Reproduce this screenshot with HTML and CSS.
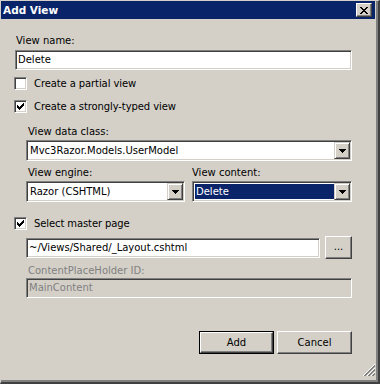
FILE: index.html
```html
<!DOCTYPE html>
<html>
<head>
<meta charset="utf-8">
<link rel="stylesheet" href="styles.css">
</head>
<body>
<div class="window">
  <div class="titlebar">
    <span class="title">Add View</span>
    <span class="close-btn"><svg width="8" height="7" viewBox="0 0 8 7" shape-rendering="crispEdges"><path d="M0 0h2v1h-2zM6 0h2v1h-2zM1 1h2v1h-2zM5 1h2v1h-2zM2 2h4v1h-4zM3 3h2v1h-2zM2 4h4v1h-4zM1 5h2v1h-2zM5 5h2v1h-2zM0 6h2v1h-2zM6 6h2v1h-2z" fill="#000"/></svg></span>
  </div>
  <div class="content">
    <div class="label l-first">View name:</div>
    <div class="field f-name"><span class="val">Delete</span></div>

    <div class="check c-partial"><span class="box"></span><span class="ctext">Create a partial view</span></div>
    <div class="check c-typed"><span class="box"><svg class="tick" width="7" height="7" viewBox="0 0 7 7" shape-rendering="crispEdges"><path d="M6 0h1v3h-1zM5 1h1v3h-1zM4 2h1v3h-1zM0 2h1v3h-1zM1 3h1v3h-1zM3 3h1v3h-1zM2 4h1v3h-1z" fill="#000"/></svg></span><span class="ctext">Create a strongly-typed view</span></div>

    <div class="indent">
      <div class="label l-class">View data class:</div>
      <div class="combo combo-class"><span class="val">Mvc3Razor.Models.UserModel</span><span class="drop"><svg width="7" height="4" viewBox="0 0 7 4" shape-rendering="crispEdges"><path d="M0 0h7v1h-7zM1 1h5v1h-5zM2 2h3v1h-3zM3 3h1v1h-1z" fill="#000"/></svg></span></div>
      <div class="pair">
        <div class="col col-engine">
          <div class="label">View engine:</div>
          <div class="combo"><span class="val">Razor (CSHTML)</span><span class="drop"><svg width="7" height="4" viewBox="0 0 7 4" shape-rendering="crispEdges"><path d="M0 0h7v1h-7zM1 1h5v1h-5zM2 2h3v1h-3zM3 3h1v1h-1z" fill="#000"/></svg></span></div>
        </div>
        <div class="col col-content">
          <div class="label">View content:</div>
          <div class="combo"><span class="val selected">Delete</span><span class="drop"><svg width="7" height="4" viewBox="0 0 7 4" shape-rendering="crispEdges"><path d="M0 0h7v1h-7zM1 1h5v1h-5zM2 2h3v1h-3zM3 3h1v1h-1z" fill="#000"/></svg></span></div>
        </div>
      </div>
    </div>

    <div class="check c-master"><span class="box"><svg class="tick" width="7" height="7" viewBox="0 0 7 7" shape-rendering="crispEdges"><path d="M6 0h1v3h-1zM5 1h1v3h-1zM4 2h1v3h-1zM0 2h1v3h-1zM1 3h1v3h-1zM3 3h1v3h-1zM2 4h1v3h-1z" fill="#000"/></svg></span><span class="ctext">Select master page</span></div>

    <div class="indent">
      <div class="path-row">
        <div class="field f-path"><span class="val">~/Views/Shared/_Layout.cshtml</span></div>
        <div class="btn btn-browse">...</div>
      </div>
      <div class="label disabled l-holder">ContentPlaceHolder ID:</div>
      <div class="field f-holder disabled-field"><span class="val">MainContent</span></div>
    </div>

    <div class="buttons">
      <div class="btn btn-default"><span class="btn-inner">Add</span></div>
      <div class="btn btn-cancel">Cancel</div>
    </div>
  </div>
  <svg class="grip" width="12" height="12" viewBox="0 0 12 12" shape-rendering="crispEdges">
    <path d="M11 0h1v1h-1zM10 1h1v1h-1zM9 2h1v1h-1zM8 3h1v1h-1zM7 4h1v1h-1zM6 5h1v1h-1zM5 6h1v1h-1zM4 7h1v1h-1zM3 8h1v1h-1zM2 9h1v1h-1zM1 10h1v1h-1zM0 11h1v1h-1z
             M11 4h1v1h-1zM10 5h1v1h-1zM9 6h1v1h-1zM8 7h1v1h-1zM7 8h1v1h-1zM6 9h1v1h-1zM5 10h1v1h-1zM4 11h1v1h-1z
             M11 8h1v1h-1zM10 9h1v1h-1zM9 10h1v1h-1zM8 11h1v1h-1z" fill="#fff"/>
    <path d="M11 1h1v2h-1zM10 2h1v2h-1zM9 3h1v2h-1zM8 4h1v2h-1zM7 5h1v2h-1zM6 6h1v2h-1zM5 7h1v2h-1zM4 8h1v2h-1zM3 9h1v2h-1zM2 10h1v2h-1zM1 11h1v1h-1z
             M11 5h1v2h-1zM10 6h1v2h-1zM9 7h1v2h-1zM8 8h1v2h-1zM7 9h1v2h-1zM6 10h1v2h-1zM5 11h1v1h-1z
             M11 9h1v2h-1zM10 10h1v2h-1zM9 11h1v1h-1z" fill="#808080"/>
  </svg>
</div>
</body>
</html>
```
FILE: styles.css
```css
html, body {
  margin: 0;
  padding: 0;
  background: #d4d0c8;
}
body {
  font-family: "DejaVu Sans", Tahoma, sans-serif;
  font-size: 10px;
  color: #000;
}
.window {
  position: relative;
  width: 380px;
  height: 384px;
  box-sizing: border-box;
  background: #d4d0c8;
  border-top: 1px solid #d4d0c8;
  border-left: 1px solid #d4d0c8;
  border-right: 2px solid #404040;
  border-bottom: 2px solid #404040;
  box-shadow: inset -2px -2px 0 #808080;
  overflow: hidden;
}
.titlebar {
  height: 18px;
  width: 374px;
  background: #0a246a;
  display: flex;
  align-items: center;
  justify-content: space-between;
  padding: 0 3px 0 2px;
  box-sizing: border-box;
}
.title {
  color: #fff;
  font-weight: bold;
  font-size: 10.5px;
  line-height: 18px;
}
.close-btn {
  width: 16px;
  height: 14px;
  box-sizing: border-box;
  background: #d4d0c8;
  border-top: 1px solid #fff;
  border-left: 1px solid #fff;
  border-right: 1px solid #404040;
  border-bottom: 1px solid #404040;
  box-shadow: inset -1px -1px 0 #808080;
  display: flex;
  align-items: center;
  justify-content: center;
  padding-right: 1px;
}
.close-btn svg { display: block; }
.content {
  padding-left: 13px;
  display: flex;
  flex-direction: column;
}
.label {
  line-height: 13px;
  height: 13px;
  white-space: nowrap;
}
.l-first {
  margin-top: 15px;
  padding-left: 2px;
}
.field, .combo {
  box-sizing: border-box;
  height: 20px;
  background: #fff;
  border: 1px solid;
  border-color: #808080 #fff #fff #808080;
  box-shadow: inset 1px 1px 0 #404040, inset -1px -1px 0 #d4d0c8;
  display: flex;
  align-items: center;
  white-space: nowrap;
  overflow: hidden;
}
.field .val {
  padding-left: 2px;
  line-height: 16px;
}
.f-name {
  margin-top: 3px;
  margin-left: 1px;
  width: 337px;
}
.check {
  display: flex;
  align-items: center;
  height: 13px;
  line-height: 13px;
}
.box {
  width: 13px;
  height: 13px;
  box-sizing: border-box;
  background: #fff;
  border: 1px solid;
  border-color: #808080 #fff #fff #808080;
  box-shadow: inset 1px 1px 0 #404040, inset -1px -1px 0 #d4d0c8;
  display: flex;
  align-items: center;
  justify-content: center;
  flex: none;
}
.tick { display: block; }
.ctext {
  margin-left: 7px;
  letter-spacing: -0.1px;
}
.c-partial { margin-top: 7px; }
.c-typed { margin-top: 10px; }
.indent {
  margin-left: 12px;
  display: flex;
  flex-direction: column;
}
.indent .label {
  padding-left: 2px;
}
.l-class { margin-top: 12px; }
.combo {
  height: 21px;
  margin-top: 2px;
  padding: 1px;
}
.combo .val {
  flex: 1;
  padding-left: 2px;
  height: 15px;
  line-height: 15px;
  align-self: flex-start;
  margin-top: 1px;
}
.combo .val.selected {
  background: #0a246a;
  color: #fff;
  margin-left: 1px;
  padding-left: 1px;
  margin-right: 0;
}
.combo-class { width: 326px; }
.drop {
  width: 16px;
  height: 17px;
  box-sizing: border-box;
  flex: none;
  background: #d4d0c8;
  border-top: 1px solid #d4d0c8;
  border-left: 1px solid #d4d0c8;
  border-right: 1px solid #404040;
  border-bottom: 1px solid #404040;
  box-shadow: inset 1px 1px 0 #fff, inset -1px -1px 0 #808080;
  display: flex;
  align-items: center;
  justify-content: center;
  margin-right: 0;
}
.drop svg { display: block; }
.pair {
  display: flex;
  margin-top: 5px;
}
.col {
  display: flex;
  flex-direction: column;
}
.col-engine { width: 159px; }
.col-content { width: 160px; margin-left: 7px; }
.col-content .label { padding-left: 0; }
.c-master { margin-top: 15px; }
.path-row {
  display: flex;
  align-items: center;
  margin-top: 6px;
  height: 23px;
}
.f-path {
  width: 294px;
  margin-top: 1px;
}
.btn {
  box-sizing: border-box;
  background: #d4d0c8;
  border-top: 1px solid #fff;
  border-left: 1px solid #fff;
  border-right: 1px solid #404040;
  border-bottom: 1px solid #404040;
  box-shadow: inset -1px -1px 0 #808080;
  display: flex;
  align-items: center;
  justify-content: center;
  white-space: nowrap;
}
.btn-browse {
  width: 27px;
  height: 23px;
  margin-left: 5px;
  padding-bottom: 2px;
}
.disabled { color: #808080; }
.l-holder { margin-top: 5px; }
.f-holder {
  width: 326px;
  margin-top: 1px;
  background: #d4d0c8;
  color: #808080;
}
.buttons {
  display: flex;
  justify-content: flex-end;
  margin-top: 33px;
  width: 338px;
  gap: 3px;
}
.buttons .btn {
  width: 75px;
  height: 23px;
}
.btn-default {
  border: 1px solid #000;
  box-shadow: none;
  padding: 0;
}
.btn-inner {
  box-sizing: border-box;
  width: 100%;
  height: 100%;
  border-top: 1px solid #fff;
  border-left: 1px solid #fff;
  border-right: 1px solid #404040;
  border-bottom: 1px solid #404040;
  box-shadow: inset -1px -1px 0 #808080;
  display: flex;
  align-items: center;
  justify-content: center;
}
.grip {
  position: absolute;
  right: 3px;
  bottom: 6px;
  display: block;
}
```
